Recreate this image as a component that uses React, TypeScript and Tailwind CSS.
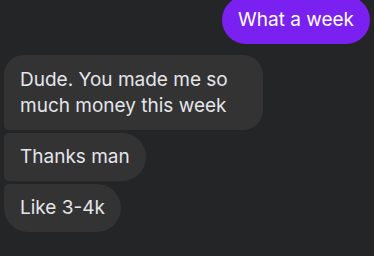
import React from "react";

export default function App() {
  return (
    <div
      className="w-[374px] h-[256px] overflow-hidden bg-[#242526] px-1 text-[19px] leading-[26px]"
      style={{ fontFamily: "Inter, 'Noto Sans', sans-serif" }}
    >
      <div className="flex justify-end -mt-1">
        <div className="rounded-[24px] bg-[#7a20f1] px-4 py-[11px] text-white">
          What a week
        </div>
      </div>
      <div className="mt-[11px] flex flex-col items-start gap-[3px] text-[#e4e6eb]">
        <div className="max-w-[259px] rounded-[20px] rounded-bl-[5px] bg-[#333334] px-4 py-[11.5px]">
          Dude. You made me so much money this week
        </div>
        <div className="rounded-[24px] rounded-tl-[5px] rounded-bl-[5px] bg-[#333334] px-4 py-[11px]">
          Thanks man
        </div>
        <div className="rounded-[24px] rounded-tl-[5px] bg-[#333334] px-4 py-[11px]">
          Like 3-4k
        </div>
      </div>
    </div>
  );
}
